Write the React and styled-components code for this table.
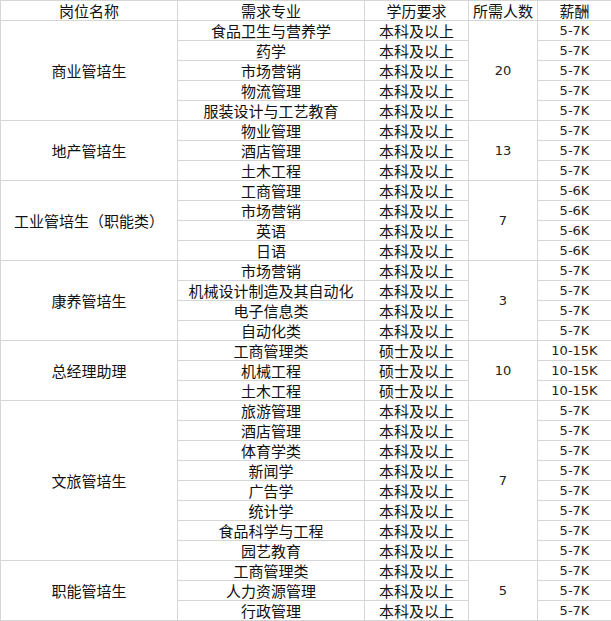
import { Fragment } from "react";
import styled, { createGlobalStyle } from "styled-components";

const GlobalStyle = createGlobalStyle`
  html, body {
    margin: 0;
    padding: 0;
    background: #ffffff;
  }
`;

const Sheet = styled.div`
  display: grid;
  grid-template-columns: 176px 186px 103px 68px 73px;
  grid-auto-rows: 19px;
  gap: 1px;
  padding: 1px 0 1px 1px;
  width: 611px;
  box-sizing: border-box;
  background: #d6d6d6;
  font-family: "Noto Sans CJK SC", "DejaVu Sans", sans-serif;
  font-size: 15px;
  color: #111;
`;

const Cell = styled.div`
  display: flex;
  align-items: center;
  justify-content: center;
  padding-top: 1px;
  box-sizing: border-box;
  background: #fff;
  white-space: nowrap;
  line-height: 18px;
  grid-row: ${(p) => (p.$span ? `span ${p.$span}` : "auto")};
`;

const NumCell = styled(Cell)`
  font-family: "DejaVu Sans", sans-serif;
  font-size: 13px;
  color: #222;
`;

const groups = [
  {
    name: "商业管培生",
    count: "20",
    rows: [
      ["食品卫生与营养学", "本科及以上", "5-7K"],
      ["药学", "本科及以上", "5-7K"],
      ["市场营销", "本科及以上", "5-7K"],
      ["物流管理", "本科及以上", "5-7K"],
      ["服装设计与工艺教育", "本科及以上", "5-7K"],
    ],
  },
  {
    name: "地产管培生",
    count: "13",
    rows: [
      ["物业管理", "本科及以上", "5-7K"],
      ["酒店管理", "本科及以上", "5-7K"],
      ["土木工程", "本科及以上", "5-7K"],
    ],
  },
  {
    name: "工业管培生（职能类）",
    count: "7",
    rows: [
      ["工商管理", "本科及以上", "5-6K"],
      ["市场营销", "本科及以上", "5-6K"],
      ["英语", "本科及以上", "5-6K"],
      ["日语", "本科及以上", "5-6K"],
    ],
  },
  {
    name: "康养管培生",
    count: "3",
    rows: [
      ["市场营销", "本科及以上", "5-7K"],
      ["机械设计制造及其自动化", "本科及以上", "5-7K"],
      ["电子信息类", "本科及以上", "5-7K"],
      ["自动化类", "本科及以上", "5-7K"],
    ],
  },
  {
    name: "总经理助理",
    count: "10",
    rows: [
      ["工商管理类", "硕士及以上", "10-15K"],
      ["机械工程", "硕士及以上", "10-15K"],
      ["土木工程", "硕士及以上", "10-15K"],
    ],
  },
  {
    name: "文旅管培生",
    count: "7",
    rows: [
      ["旅游管理", "本科及以上", "5-7K"],
      ["酒店管理", "本科及以上", "5-7K"],
      ["体育学类", "本科及以上", "5-7K"],
      ["新闻学", "本科及以上", "5-7K"],
      ["广告学", "本科及以上", "5-7K"],
      ["统计学", "本科及以上", "5-7K"],
      ["食品科学与工程", "本科及以上", "5-7K"],
      ["园艺教育", "本科及以上", "5-7K"],
    ],
  },
  {
    name: "职能管培生",
    count: "5",
    rows: [
      ["工商管理类", "本科及以上", "5-7K"],
      ["人力资源管理", "本科及以上", "5-7K"],
      ["行政管理", "本科及以上", "5-7K"],
    ],
  },
];

function Group({ group }) {
  const span = group.rows.length;
  return group.rows.map((row, i) => (
    <Fragment key={i}>
      {i === 0 && <Cell $span={span}>{group.name}</Cell>}
      <Cell>{row[0]}</Cell>
      <Cell>{row[1]}</Cell>
      {i === 0 && <NumCell $span={span}>{group.count}</NumCell>}
      <NumCell>{row[2]}</NumCell>
    </Fragment>
  ));
}

export default function App() {
  return (
    <>
      <GlobalStyle />
      <Sheet>
        <Cell>岗位名称</Cell>
        <Cell>需求专业</Cell>
        <Cell>学历要求</Cell>
        <Cell>所需人数</Cell>
        <Cell>薪酬</Cell>
        {groups.map((g) => (
          <Group key={g.name} group={g} />
        ))}
      </Sheet>
    </>
  );
}
